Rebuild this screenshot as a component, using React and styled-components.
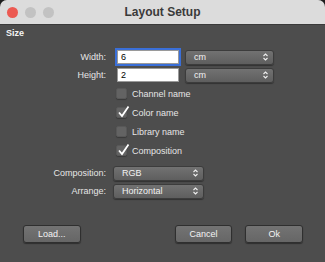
import styled, { createGlobalStyle } from "styled-components"

const Global = createGlobalStyle`
  html, body { margin: 0; padding: 0; background: #1d1d1d; }
  body { font-family: "Liberation Sans", Arial, sans-serif; }
`

const Window = styled.div`
  width: 325px;
  height: 262px;
  background: #4d4d4d;
  border-radius: 7px 7px 0 0;
  overflow: hidden;
  display: flex;
  flex-direction: column;
`

const TitleBar = styled.div`
  height: 25px;
  flex: none;
  background: #dcdcdc;
  display: grid;
  grid-template-columns: 1fr auto 1fr;
  align-items: center;
  border-bottom: 1px solid #3a3a3a;
  box-sizing: border-box;
`

const Lights = styled.div`
  display: flex;
  gap: 7px;
  padding-left: 7px;
`

const Light = styled.span`
  width: 11px;
  height: 11px;
  border-radius: 50%;
  background: ${(p) => (p.red ? "#ec5a52" : "#c2c2c2")};
`

const Title = styled.div`
  font-size: 12px;
  font-weight: 700;
  color: #3a3a3a;
`

const Section = styled.div`
  font-size: 9px;
  font-weight: 700;
  color: #f4f4f4;
  padding: 3px 0 0 6px;
  height: 12px;
`

const Form = styled.div`
  display: flex;
  flex-direction: column;
  padding-top: 8px;
`

const Row = styled.div`
  display: flex;
  align-items: center;
  height: 18px;
  margin-top: ${(p) => p.mt || 0}px;
`

const Label = styled.div`
  width: 106px;
  text-align: right;
  font-size: 9px;
  color: #e6e6e6;
  margin-right: ${(p) => p.gap}px;
`

const TextInput = styled.div`
  width: 57px;
  height: 12px;
  background: #fff;
  border: 1px solid #9a9a9a;
  font-size: 9px;
  color: #000;
  padding-left: 3px;
  line-height: 12px;
  box-sizing: content-box;
  box-shadow: ${(p) => (p.focus ? "0 0 0 2px #3a6fd8" : "none")};
`

const Select = styled.div`
  width: ${(p) => p.w}px;
  height: 15px;
  margin-left: ${(p) => p.ml || 0}px;
  box-sizing: border-box;
  background: linear-gradient(#727272, #5e5e5e);
  border: 1px solid #3c3c3c;
  border-radius: 3px;
  box-shadow: 0 1px 1px rgba(0, 0, 0, 0.35);
  display: flex;
  align-items: center;
  justify-content: space-between;
  padding: 0 5px 0 8px;
  font-size: 9px;
  color: #f2f2f2;
`

const CheckRow = styled.div`
  display: flex;
  align-items: center;
  gap: 5px;
  height: 19px;
  padding-left: 116px;
  font-size: 9px;
  color: #e6e6e6;
`

const Box = styled.span`
  position: relative;
  width: 11px;
  height: 11px;
  box-sizing: border-box;
  background: #636363;
  border: 1px solid #585858;
  border-radius: 2px;
  box-shadow: 0 1px 1px rgba(0, 0, 0, 0.25);
`

const Check = styled.svg`
  position: absolute;
  left: 0px;
  top: -3px;
`

const Footer = styled.div`
  display: flex;
  align-items: center;
  padding: 0 22px 0 23px;
  margin-top: 25px;
`

const Button = styled.div`
  width: 58px;
  height: 18px;
  box-sizing: border-box;
  background: linear-gradient(#737373, #666);
  border: 1px solid #2f2f2f;
  border-radius: 3px;
  box-shadow: 0 1px 1px rgba(0, 0, 0, 0.4);
  display: flex;
  align-items: center;
  justify-content: center;
  font-size: 9px;
  color: #f4f4f4;
  margin-left: ${(p) => p.ml || 0}px;
`

const Arrows = () => (
  <svg width="5" height="8" viewBox="0 0 5 8">
    <path d="M0.5 3 L2.5 1 L4.5 3 M0.5 5 L2.5 7 L4.5 5" stroke="#eee" strokeWidth="1.1" fill="none" />
  </svg>
)

const CheckItem = ({ checked, children }) => (
  <CheckRow>
    <Box>
      {checked && (
        <Check width="13" height="13" viewBox="0 0 13 13">
          <path d="M2 7.5 L5 11 L11.5 1.5" stroke="#fff" strokeWidth="1.8" fill="none" />
        </Check>
      )}
    </Box>
    {children}
  </CheckRow>
)

export default function App() {
  return (
    <>
      <Global />
      <Window>
        <TitleBar>
          <Lights>
            <Light red />
            <Light />
            <Light />
          </Lights>
          <Title>Layout Setup</Title>
          <div />
        </TitleBar>
        <Section>Size</Section>
        <Form>
          <Row>
            <Label gap={11}>Width:</Label>
            <TextInput focus>6</TextInput>
            <Select w={89} ml={6}>cm<Arrows /></Select>
          </Row>
          <Row>
            <Label gap={11}>Height:</Label>
            <TextInput>2</TextInput>
            <Select w={89} ml={6}>cm<Arrows /></Select>
          </Row>
          <CheckItem>Channel name</CheckItem>
          <CheckItem checked>Color name</CheckItem>
          <CheckItem>Library name</CheckItem>
          <CheckItem checked>Composition</CheckItem>
          <Row mt={4}>
            <Label gap={7}>Composition:</Label>
            <Select w={91}>RGB<Arrows /></Select>
          </Row>
          <Row>
            <Label gap={7}>Arrange:</Label>
            <Select w={91}>Horizontal<Arrows /></Select>
          </Row>
        </Form>
        <Footer>
          <Button>Load...</Button>
          <Button ml={94}>Cancel</Button>
          <Button ml={13}>Ok</Button>
        </Footer>
      </Window>
    </>
  )
}
